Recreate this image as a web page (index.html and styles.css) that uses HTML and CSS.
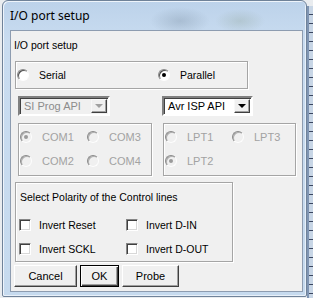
FILE: index.html
```html
<!DOCTYPE html>
<html lang="en">

<head>
    <meta charset="UTF-8">
    <title>I/O port setup</title>
    <link rel="stylesheet" href="styles.css">
</head>

<body>
    <div class="desk">
        <div class="win">
            <div class="title">I/O port setup</div>
            <div class="client">
                <div class="heading">I/O port setup</div>

                <!-- serial / parallel -->
                <div class="group g-mode">
                    <label class="opt opt-serial"><span class="radio"></span>Serial</label>
                    <label class="opt"><span class="radio on"></span>Parallel</label>
                </div>

                <div class="row combos">
                    <div class="combo off c-left"><span class="val">SI Prog API</span><span class="arrow"></span></div>
                    <div class="combo c-right"><span class="val">Avr ISP API</span><span class="arrow"></span></div>
                </div>

                <div class="row ports">
                    <div class="group g-port g-com">
                        <label class="opt off"><span class="radio on"></span>COM1</label>
                        <label class="opt off"><span class="radio"></span>COM3</label>
                        <label class="opt off"><span class="radio"></span>COM2</label>
                        <label class="opt off"><span class="radio"></span>COM4</label>
                    </div>
                    <div class="group g-port g-lpt">
                        <label class="opt off"><span class="radio"></span>LPT1</label>
                        <label class="opt off"><span class="radio"></span>LPT3</label>
                        <label class="opt off"><span class="radio on"></span>LPT2</label>
                    </div>
                </div>

                <!-- polarity -->
                <div class="group g-pol">
                    <div class="gtitle">Select Polarity of the Control lines</div>
                    <div class="checks">
                        <label class="opt"><span class="check"></span>Invert Reset</label>
                        <label class="opt"><span class="check"></span>Invert D-IN</label>
                        <label class="opt"><span class="check"></span>Invert SCKL</label>
                        <label class="opt"><span class="check"></span>Invert D-OUT</label>
                    </div>
                </div>

                <div class="buttons">
                    <div class="btn b-cancel">Cancel</div>
                    <div class="btn b-ok">OK</div>
                    <div class="btn b-probe">Probe</div>
                </div>
            </div>
        </div>
        <div class="edge"></div>
    </div>
</body>

</html>
```

FILE: styles.css
```css
* {
    box-sizing: border-box;
}

body {
    margin: 0;
    width: 313px;
    height: 298px;
    overflow: hidden;
    background-color: #e9ecef;
    font-family: "Liberation Sans", Arial, sans-serif;
    font-size: 10.5px;
    color: #000;
}

.desk {
    display: flex;
    height: 298px;
    padding-left: 2px;
}

/* window frame */
.win {
    width: 305px;
    height: 297px;
    padding: 0 5px 5px 7px;
    border: 1px solid #6f8299;
    border-radius: 6px 6px 2px 2px;
    background: linear-gradient(#bcd2ea, #c9dcf0 40px, #c6daee);
    box-shadow: inset 1px 1px 0 #eef4fb, inset -1px -1px 0 #e8f0f9;
}

.title {
    height: 29px;
    line-height: 29px;
    font-family: "Noto Sans", "Segoe UI", sans-serif;
    font-size: 12px;
    background: radial-gradient(ellipse 30px 14px at 170px 20px, rgba(110, 130, 150, 0.3), transparent),
                radial-gradient(ellipse 25px 12px at 230px 20px, rgba(130, 150, 130, 0.25), transparent);
}

.client {
    width: 293px;
    height: 262px;
    background-color: #f0f0f0;
    border: 1px solid #8d9cb0;
    display: flex;
    flex-direction: column;
    align-items: flex-start;
}

.heading {
    margin: 7px 0 0 3px;
    height: 14px;
    line-height: 14px;
}

.group {
    border: 1px solid #a5a5a5;
    box-shadow: inset 1px 1px 0 #fff, 1px 1px 0 #fff;
}

.opt {
    display: flex;
    align-items: center;
    height: 14px;
    white-space: nowrap;
}

.opt.off {
    color: #a2a2a2;
}

.radio {
    width: 12px;
    height: 12px;
    margin-right: 10px;
    border-radius: 50%;
    background-color: #fff;
    border: 1px solid;
    border-color: #8a8a8a #fdfdfd #fdfdfd #8a8a8a;
    box-shadow: inset 1px 1px 0 #505050;
    display: flex;
    align-items: center;
    justify-content: center;
    flex: none;
}

.radio.on::after {
    content: "";
    width: 4px;
    height: 4px;
    border-radius: 50%;
    background-color: #000;
}

.off .radio {
    background-color: #f0f0f0;
    box-shadow: inset 1px 1px 0 #b0b0b0;
}

.off .radio.on::after {
    background-color: #9a9a9a;
}

.check {
    width: 12px;
    height: 12px;
    margin-right: 8px;
    background-color: #fff;
    border: 1px solid;
    border-color: #868686 #fff #fff #868686;
    box-shadow: inset 1px 1px 0 #404040, inset -1px -1px 0 #d8d8d8;
    flex: none;
}

.g-mode {
    margin: 9px 0 0 4px;
    width: 233px;
    height: 28px;
    padding-left: 1px;
    display: grid;
    grid-template-columns: 141px auto;
    align-items: center;
}

.row {
    display: flex;
    margin-top: 7px;
}

.combo {
    height: 20px;
    display: flex;
    align-items: center;
    background-color: #fff;
    border: 2px solid;
    border-color: #808080 #fff #fff #808080;
    box-shadow: inset 1px 1px 0 #404040;
    padding: 0 1px 0 4px;
    font-size: 11px;
}

.combo .val {
    flex: 1;
}

.combo .arrow {
    width: 16px;
    height: 14px;
    background-color: #f0f0f0;
    border: 1px solid;
    border-color: #f8f8f8 #404040 #404040 #f8f8f8;
    box-shadow: inset -1px -1px 0 #a0a0a0;
    display: flex;
    align-items: center;
    justify-content: center;
}

.combo .arrow::after {
    content: "";
    border-left: 4px solid transparent;
    border-right: 4px solid transparent;
    border-top: 4px solid #000;
}

.combo.off {
    background-color: #f0f0f0;
    color: #8c8c8c;
}

.combo.off .arrow::after {
    border-top-color: #a0a0a0;
}

.c-left {
    margin-left: 7px;
    width: 92px;
}

.c-right {
    margin-left: 52px;
    width: 91px;
}

.g-port {
    height: 53px;
    padding: 6px 0 0 1px;
    display: grid;
    grid-template-columns: 67px auto;
    grid-auto-rows: 24px;
    align-items: start;
    font-size: 11px;
}

.g-com {
    margin-left: 7px;
    width: 134px;
}

.g-lpt {
    margin-left: 11px;
    width: 133px;
}

.g-pol {
    margin: 6px 0 0 4px;
    width: 218px;
    height: 80px;
    padding: 7px 0 0 3px;
}

.gtitle {
    padding-left: 1px;
    line-height: 14px;
}

.checks {
    margin-top: 14px;
    display: grid;
    grid-template-columns: 107px auto;
    grid-auto-rows: 24px;
}

.buttons {
    display: flex;
    gap: 3px;
    margin: 3px 0 0 3px;
}

.btn {
    height: 22px;
    line-height: 20px;
    text-align: center;
    font-size: 11px;
    background-color: #f0f0f0;
    border: 1px solid;
    border-color: #fff #404040 #404040 #fff;
    box-shadow: inset -1px -1px 0 #a0a0a0;
}

.b-cancel {
    width: 63px;
}

.b-ok {
    width: 39px;
    border-color: #000;
    box-shadow: inset 1px 1px 0 #fff, inset -1px -1px 0 #404040, inset -2px -2px 0 #a0a0a0;
}

.b-probe {
    width: 57px;
}

/* desktop showing at the right */
.edge {
    flex: 1;
    margin-top: 6px;
    background: repeating-linear-gradient(#c8d6e6 0, #c8d6e6 8px, #3a4660 8px, #3a4660 9px);
    border-left: 2px solid #7f95b3;
}
```
